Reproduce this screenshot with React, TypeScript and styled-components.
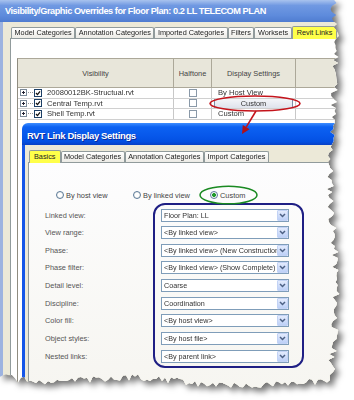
import React from 'react';
import styled, { createGlobalStyle } from 'styled-components';

const GlobalStyle = createGlobalStyle`
  html, body {
    margin: 0;
    padding: 0;
    background: #fff;
  }
  body {
    font-family: "Liberation Sans", Arial, sans-serif;
  }
`;

// jagged "torn paper" outline of the screenshot (right and bottom edges)
const tornEdge = (() => {
  let seed = 11;
  const rnd = () => {
    seed = (seed * 9301 + 49297) % 233280;
    return seed / 233280 - 0.5;
  };
  const pts: string[] = ['0px 0px'];
  for (let y = 0; y <= 376; y += 3) {
    const x = 333 + Math.sin(y / 37) * 3 + rnd() * 8;
    pts.push(`${x.toFixed(1)}px ${y}px`);
  }
  for (let x = 330; x >= 0; x -= 3) {
    const y = 377 + x * 0.025 + Math.sin(x / 29) * 3 + rnd() * 7;
    pts.push(`${x}px ${y.toFixed(1)}px`);
  }
  return `polygon(${pts.join(', ')})`;
})();

const Page = styled.div`
  position: relative;
  width: 354px;
  height: 400px;
  overflow: hidden;
  background: #fff;
`;

const Shadow = styled.div`
  width: 354px;
  height: 400px;
  filter: drop-shadow(4px 4px 3px rgba(0, 0, 0, 0.55));
`;

const Torn = styled.div`
  position: relative;
  width: 354px;
  height: 400px;
  clip-path: ${tornEdge};
`;

/* ---------- outer dialog ---------- */

const OuterWindow = styled.div`
  width: 354px;
  height: 400px;
  display: flex;
  flex-direction: column;
`;

const OuterTitle = styled.div`
  height: 22px;
  flex: none;
  display: flex;
  align-items: center;
  padding-left: 5px;
  background: linear-gradient(#a9c3ee 0%, #7099e2 25%, #5e8bdc 70%, #4f7cd0 100%);
  color: #fff;
  font: bold 9.2px "Liberation Sans", Arial, sans-serif;
  letter-spacing: -0.45px;
  white-space: nowrap;
`;

const OuterBody = styled.div`
  flex: 1;
  display: flex;
  flex-direction: column;
  background: #ece9d8;
  border-left: 3px solid #9db3e0;
  padding: 4px 0 0 7px;
`;

const TabRow = styled.div`
  height: 12px;
  flex: none;
  display: flex;
  align-items: flex-end;
  padding-left: 1px;
`;

const Tab = styled.div<{ $active?: boolean; $mark?: boolean }>`
  box-sizing: border-box;
  height: ${p => (p.$active ? 13 : 11)}px;
  line-height: ${p => (p.$active ? 12 : 10)}px;
  padding: 0 ${p => (p.$active ? 4 : 2.5)}px;
  margin-bottom: ${p => (p.$active ? -1 : 0)}px;
  border: 1px solid #919b9c;
  border-bottom: 0;
  border-radius: 2px 2px 0 0;
  background: ${p => (p.$mark ? '#ffff4a' : 'linear-gradient(#ffffff, #ecebe6)')};
  color: #222;
  font-size: 7.3px;
  white-space: nowrap;
  position: relative;
  z-index: ${p => (p.$active ? 1 : 0)};
`;

const OuterPanel = styled.div`
  flex: 1;
  display: flex;
  flex-direction: column;
  background: #fff;
  border: 1px solid #919b9c;
  padding: 19px 0 0 6px;
`;

const Table = styled.div`
  flex: 1;
  display: flex;
  flex-direction: column;
  border-left: 1px solid #8f8c80;
  border-top: 1px solid #aca899;
`;

const HeaderRow = styled.div`
  display: grid;
  grid-template-columns: 156px 38px 84px 1fr;
  height: 28px;
  background: #e8e6da;
  border-bottom: 1px solid #aca899;
`;

const HeaderCell = styled.div`
  display: flex;
  align-items: center;
  justify-content: center;
  border-right: 1px solid #aca899;
  color: #444;
  font-size: 7.4px;
`;

const Row = styled.div`
  display: grid;
  grid-template-columns: 156px 38px 84px 1fr;
  height: 10.5px;
  box-sizing: border-box;
  border-bottom: 1px solid #d0d0d0;
`;

const Cell = styled.div<{ $center?: boolean }>`
  display: flex;
  align-items: center;
  justify-content: ${p => (p.$center ? 'center' : 'flex-start')};
  padding-left: ${p => (p.$center ? 0 : 2)}px;
  border-right: 1px solid #c8c8c8;
  color: #333;
  font-size: 7.6px;
  white-space: nowrap;
  overflow: hidden;
`;

const Dots = styled.span`
  width: 5px;
  border-top: 1px dotted #9a9a9a;
  margin: 0 1px;
`;

const FileName = styled.span`
  margin-left: 5px;
`;

const CellButton = styled.div`
  flex: 1;
  height: 9px;
  margin: 0 2px 0 0;
  border: 1px solid #7f8ea6;
  border-radius: 2px;
  background: linear-gradient(#f4f5f9, #dfe3ec);
  color: #333;
  font-size: 7.4px;
  line-height: 9px;
  text-align: center;
`;

const Link = styled.span`
  padding-left: 4px;
`;

/* ---------- inner dialog (window over the first one) ---------- */

const InnerWindow = styled.div`
  position: absolute;
  left: 22px;
  top: 123px;
  width: 330px;
  height: 277px;
  display: flex;
  flex-direction: column;
`;

const InnerTitle = styled.div`
  height: 22px;
  flex: none;
  display: flex;
  align-items: center;
  padding: 2px 0 0 5px;
  box-sizing: border-box;
  border-radius: 6px 6px 0 0;
  background: linear-gradient(#3d8dff 0%, #0c62f2 18%, #0757ea 60%, #0350e2 85%, #0840c4 100%);
  color: #fff;
  font: bold 9.5px "Liberation Sans", Arial, sans-serif;
  letter-spacing: -0.35px;
  text-shadow: 1px 1px 0 #0a2a9a;
  white-space: nowrap;
`;

const InnerBody = styled.div`
  flex: 1;
  display: flex;
  flex-direction: column;
  background: #ece9d8;
  border-left: 3px solid #1456e8;
  padding: 4px 0 0 3px;
`;

const InnerTabRow = styled(TabRow)`
  height: 13px;
`;

const InnerPanel = styled.div`
  flex: 1;
  display: flex;
  flex-direction: column;
  background: linear-gradient(#fdfdfe, #f6f5f0);
  border: 1px solid #919b9c;
  padding-top: 25px;
`;

const RadioRow = styled.div`
  height: 14px;
  display: flex;
  align-items: center;
  padding-left: 27px;
`;

const RadioItem = styled.label`
  width: 77px;
  display: flex;
  align-items: center;
  gap: 2px;
  color: #444;
  font-size: 7.4px;
  white-space: nowrap;
`;

const RadioDot = styled.span<{ $on?: boolean }>`
  box-sizing: border-box;
  width: 8px;
  height: 8px;
  border-radius: 50%;
  border: 1px solid #5a7a98;
  background: ${p =>
    p.$on
      ? 'radial-gradient(circle, #1f9a2a 0 1.6px, #e8efe8 2.2px, #fff 3px)'
      : 'radial-gradient(circle, #fff 40%, #dcdcd6 100%)'};
`;

const Form = styled.div`
  display: flex;
  margin-top: 1px;
`;

const LabelCol = styled.div`
  box-sizing: border-box;
  width: 124px;
  padding: 5.5px 0 0 16px;
  display: flex;
  flex-direction: column;
  gap: 4.625px;
`;

const FieldLabel = styled.div`
  height: 13px;
  line-height: 13px;
  color: #555;
  font-size: 7.4px;
  white-space: nowrap;
`;

const BlueBox = styled.div`
  box-sizing: border-box;
  width: 151px;
  padding: 3.5px 13px 3.5px 6px;
  border: 2px solid #1f1f84;
  border-radius: 12px;
  display: flex;
  flex-direction: column;
  gap: 4.625px;
`;

const Select = styled.div`
  box-sizing: border-box;
  height: 13px;
  display: flex;
  align-items: center;
  padding-left: 2px;
  border: 1px solid #7f9db9;
  background: #fff;
`;

const SelectText = styled.span`
  flex: 1;
  overflow: hidden;
  white-space: nowrap;
  color: #333;
  font-size: 7.2px;
`;

const SelectArrow = styled.span`
  box-sizing: border-box;
  width: 11px;
  height: 11px;
  flex: none;
  display: flex;
  align-items: center;
  justify-content: center;
  border: 1px solid #c3d3f5;
  border-radius: 1px;
  background: linear-gradient(#e3ebfd, #bdd0f7);
`;

const Marks = styled.svg`
  position: absolute;
  left: 0;
  top: 0;
  pointer-events: none;
`;

const Expander = () => (
  <svg width="7" height="7" viewBox="0 0 7 7">
    <rect x="0.5" y="0.5" width="6" height="6" fill="#fff" stroke="#7b8a99" />
    <path d="M2 3.5h3M3.5 2v3" stroke="#223" strokeWidth="1" />
  </svg>
);

const Check = ({ on }: { on?: boolean }) => (
  <svg width="8" height="8" viewBox="0 0 8 8">
    <rect x="0.5" y="0.5" width="7" height="7" fill="#fff" stroke={on ? '#1c3f66' : '#8a99a8'} />
    {on && <path d="M2 4l1.5 1.6L6 2.4" fill="none" stroke="#111" strokeWidth="1.3" />}
  </svg>
);

const Chevron = () => (
  <svg width="7" height="5" viewBox="0 0 7 5">
    <path d="M1 1l2.5 2.5L6 1" fill="none" stroke="#4d6185" strokeWidth="1.5" />
  </svg>
);

const links = [
  { name: '20080012BK-Structual.rvt', display: 'By Host View' },
  { name: 'Central Temp.rvt', display: 'Custom', button: true },
  { name: 'Shell Temp.rvt', display: 'Custom' },
];

const fields = [
  ['Linked view:', 'Floor Plan: LL'],
  ['View range:', '<By linked view>'],
  ['Phase:', '<By linked view> (New Construction)'],
  ['Phase filter:', '<By linked view> (Show Complete)'],
  ['Detail level:', 'Coarse'],
  ['Discipline:', 'Coordination'],
  ['Color fill:', '<By host view>'],
  ['Object styles:', '<By host file>'],
  ['Nested links:', '<By parent link>'],
];

export default function App() {
  return (
    <Page>
      <GlobalStyle />
      <Shadow>
        <Torn>
          <OuterWindow>
            <OuterTitle>Visibility/Graphic Overrides for Floor Plan: 0.2 LL TELECOM PLAN</OuterTitle>
            <OuterBody>
              <TabRow>
                <Tab>Model Categories</Tab>
                <Tab>Annotation Categories</Tab>
                <Tab>Imported Categories</Tab>
                <Tab>Filters</Tab>
                <Tab>Worksets</Tab>
                <Tab $active $mark>Revit Links</Tab>
              </TabRow>
              <OuterPanel>
                <Table>
                  <HeaderRow>
                    <HeaderCell>Visibility</HeaderCell>
                    <HeaderCell>Halftone</HeaderCell>
                    <HeaderCell>Display Settings</HeaderCell>
                    <HeaderCell />
                  </HeaderRow>
                  {links.map(l => (
                    <Row key={l.name}>
                      <Cell>
                        <Expander />
                        <Dots />
                        <Check on />
                        <FileName>{l.name}</FileName>
                      </Cell>
                      <Cell $center>
                        <Check />
                      </Cell>
                      <Cell>
                        {l.button ? <CellButton>{l.display}</CellButton> : <Link>{l.display}</Link>}
                      </Cell>
                      <Cell />
                    </Row>
                  ))}
                </Table>
              </OuterPanel>
            </OuterBody>
          </OuterWindow>

          <InnerWindow>
            <InnerTitle>RVT Link Display Settings</InnerTitle>
            <InnerBody>
              <InnerTabRow>
                <Tab $active $mark>Basics</Tab>
                <Tab>Model Categories</Tab>
                <Tab>Annotation Categories</Tab>
                <Tab>Import Categories</Tab>
              </InnerTabRow>
              <InnerPanel>
                <RadioRow>
                  <RadioItem>
                    <RadioDot />
                    By host view
                  </RadioItem>
                  <RadioItem>
                    <RadioDot />
                    By linked view
                  </RadioItem>
                  <RadioItem>
                    <RadioDot $on />
                    Custom
                  </RadioItem>
                </RadioRow>
                <Form>
                  <LabelCol>
                    {fields.map(([label]) => (
                      <FieldLabel key={label}>{label}</FieldLabel>
                    ))}
                  </LabelCol>
                  <BlueBox>
                    {fields.map(([label, value]) => (
                      <Select key={label}>
                        <SelectText>{value}</SelectText>
                        <SelectArrow>
                          <Chevron />
                        </SelectArrow>
                      </Select>
                    ))}
                  </BlueBox>
                </Form>
              </InnerPanel>
            </InnerBody>
          </InnerWindow>

          <Marks width="354" height="400" viewBox="0 0 354 400">
            <ellipse cx="255" cy="103.5" rx="45" ry="7.5" fill="none" stroke="#c4141c" strokeWidth="1.6" />
            <path d="M256 111L246.2 127.2" stroke="#c4141c" strokeWidth="1.6" />
            <path d="M242 134L242.8 125.1L249.6 129.3Z" fill="#b01018" />
            <ellipse cx="228.5" cy="195" rx="28.5" ry="8.8" fill="none" stroke="#1a8a22" strokeWidth="1.5" />
          </Marks>
        </Torn>
      </Shadow>
    </Page>
  );
}
